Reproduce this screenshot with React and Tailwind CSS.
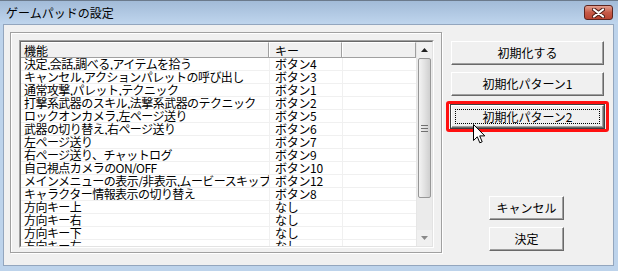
import React from 'react';

const ROWS = [
  ['決定,会話,調べる,アイテムを拾う', 'ボタン4'],
  ['キャンセル,アクションパレットの呼び出し', 'ボタン3'],
  ['通常攻撃,パレット,テクニック', 'ボタン1'],
  ['打撃系武器のスキル,法撃系武器のテクニック', 'ボタン2'],
  ['ロックオンカメラ,左ページ送り', 'ボタン5'],
  ['武器の切り替え,右ページ送り', 'ボタン6'],
  ['左ページ送り', 'ボタン7'],
  ['右ページ送り、チャットログ', 'ボタン9'],
  ['自己視点カメラのON/OFF', 'ボタン10'],
  ['メインメニューの表示/非表示,ムービースキップ', 'ボタン12'],
  ['キャラクター情報表示の切り替え', 'ボタン8'],
  ['方向キー上', 'なし'],
  ['方向キー右', 'なし'],
  ['方向キー下', 'なし'],
  ['方向キー左', 'なし'],
];

function ClassicButton({ children, className = '', focused = false }) {
  return (
    <div
      className={`flex items-center justify-center bg-[#f0f0f0] border border-t-white border-l-white border-r-[#696969] border-b-[#696969] shadow-[inset_-1px_-1px_0_#a0a0a0] text-[12px] text-black ${focused ? 'outline outline-1 outline-[#404040]' : ''} ${className}`}
    >
      {focused ? (
        <div className="flex items-center justify-center w-[calc(100%-6px)] h-[calc(100%-6px)] border border-dotted border-black">
          {children}
        </div>
      ) : (
        children
      )}
    </div>
  );
}

function Cursor() {
  return (
    <svg className="absolute left-[473px] top-[124px]" width="13" height="21" viewBox="0 0 13 21">
      <path
        d="M0.5 0.5 L0.5 16.5 L4.3 12.8 L6.8 18.8 L9.2 17.8 L6.7 11.9 L11.8 11.9 Z"
        fill="#fff"
        stroke="#000"
        strokeWidth="1"
        strokeLinejoin="miter"
      />
    </svg>
  );
}

export default function App() {
  return (
    <div className="relative w-[618px] h-[271px] flex flex-col bg-[#bdd3eb] font-['Noto_Sans_CJK_JP','Noto_Sans',sans-serif] overflow-hidden">
      {/* Title bar */}
      <div className="h-[24px] flex items-center justify-between pl-[6px] pr-[5px] bg-gradient-to-b from-[#a2bbd8] to-[#bfd5ed] border-t border-[#6b7a8c]">
        <span className="text-[12px] text-black leading-none">ゲームパッドの設定</span>
        <div className="w-[29px] h-[15px] flex items-center justify-center rounded-[3px] border border-[#5c2520] bg-gradient-to-b from-[#e3a090] via-[#c65a48] to-[#b84432]">
          <svg width="13" height="10" viewBox="0 0 13 10">
            <path d="M2 1.5 L11 8.5 M11 1.5 L2 8.5" stroke="#4a1a14" strokeWidth="4" strokeLinecap="round" />
            <path d="M2 1.5 L11 8.5 M11 1.5 L2 8.5" stroke="#fff" strokeWidth="2.2" strokeLinecap="round" />
          </svg>
        </div>
      </div>

      {/* Frame + client */}
      <div className="flex-1 flex pl-[3px] pr-[4px] pb-[5px]">
        <div className="flex-1 flex bg-[#f0f0f0] border border-[#93a6be]">
          {/* Group box */}
          <div className="ml-[6px] mt-[7px] w-[432px] h-[221px] border border-[#a0a0a0] shadow-[inset_1px_1px_0_#fff,1px_1px_0_#fff] pl-[8px] pt-[7px]">
            <div className="w-[415px] h-[208px] border border-t-[#a0a0a0] border-l-[#a0a0a0] border-r-white border-b-white">
              <div className="w-full h-full flex border border-t-[#696969] border-l-[#696969] border-r-[#e3e3e3] border-b-[#e3e3e3] bg-white">
                {/* list content */}
                <div className="w-[395px] flex flex-col overflow-hidden">
                  <div className="h-[16px] flex shrink-0 bg-[#f0f0f0] border-b border-[#a0a0a0] text-[12px] leading-[15px] text-black">
                    <div className="w-[248px] pl-[3px] border-t border-white border-r border-r-[#a0a0a0]">機能</div>
                    <div className="w-[73px] pl-[5px] border-t border-white border-l border-l-white border-r border-r-[#a0a0a0]">キー</div>
                    <div className="flex-1 border-t border-white border-l border-l-white border-r border-r-[#a0a0a0]"></div>
                  </div>
                  {ROWS.map(([name, key], i) => (
                    <div key={i} className="h-[13px] flex shrink-0 border-b border-[#f0f0f0] text-[12px] leading-[12px] text-black">
                      <div className="w-[249px] pl-[3px] tracking-[-0.55px] border-r border-[#f0f0f0] whitespace-nowrap overflow-hidden">{name}</div>
                      <div className="w-[73px] pl-[5px] tracking-[-0.3px] border-r border-[#f0f0f0] whitespace-nowrap overflow-hidden">{key}</div>
                      <div className="flex-1"></div>
                    </div>
                  ))}
                </div>
                {/* scrollbar */}
                <div className="w-[16px] flex flex-col bg-[#ebebeb] border-l border-[#e6e6e6]">
                  <div className="h-[16px] flex items-center justify-center bg-[#f0f0f0]">
                    <svg width="7" height="4" viewBox="0 0 7 4"><path d="M3.5 0 L7 4 L0 4 Z" fill="#222" /></svg>
                  </div>
                  <div className="h-[140px] mx-[1px] flex items-center justify-center rounded-[2px] border border-[#979797] bg-gradient-to-r from-[#f3f3f3] via-[#e2e2e2] to-[#cfcfcf]">
                    <div className="flex flex-col gap-[2px]">
                      <div className="w-[7px] h-px bg-[#707070]"></div>
                      <div className="w-[7px] h-px bg-[#707070]"></div>
                      <div className="w-[7px] h-px bg-[#707070]"></div>
                    </div>
                  </div>
                  <div className="flex-1"></div>
                  <div className="h-[16px] flex items-center justify-center bg-[#f0f0f0]">
                    <svg width="7" height="4" viewBox="0 0 7 4"><path d="M0 0 L7 0 L3.5 4 Z" fill="#8a8a8a" /></svg>
                  </div>
                </div>
              </div>
            </div>
          </div>

          {/* Right buttons */}
          <div className="ml-[9px] mt-[16px] w-[153px] flex flex-col">
            <ClassicButton className="h-[24px]">初期化する</ClassicButton>
            <ClassicButton className="h-[24px] mt-[7px]">初期化パターン1</ClassicButton>
            <div className="mt-[5px] -mx-[5px] p-[1px] px-[2px] border-[3px] border-[#ff1010] rounded-[3px]">
              <ClassicButton className="h-[23px]" focused>初期化パターン2</ClassicButton>
            </div>
            <ClassicButton className="h-[24px] w-[75px] ml-[38px] mt-[64px]">キャンセル</ClassicButton>
            <ClassicButton className="h-[24px] w-[75px] ml-[38px] mt-[7px]">決定</ClassicButton>
          </div>
        </div>
      </div>

      <Cursor />
    </div>
  );
}
